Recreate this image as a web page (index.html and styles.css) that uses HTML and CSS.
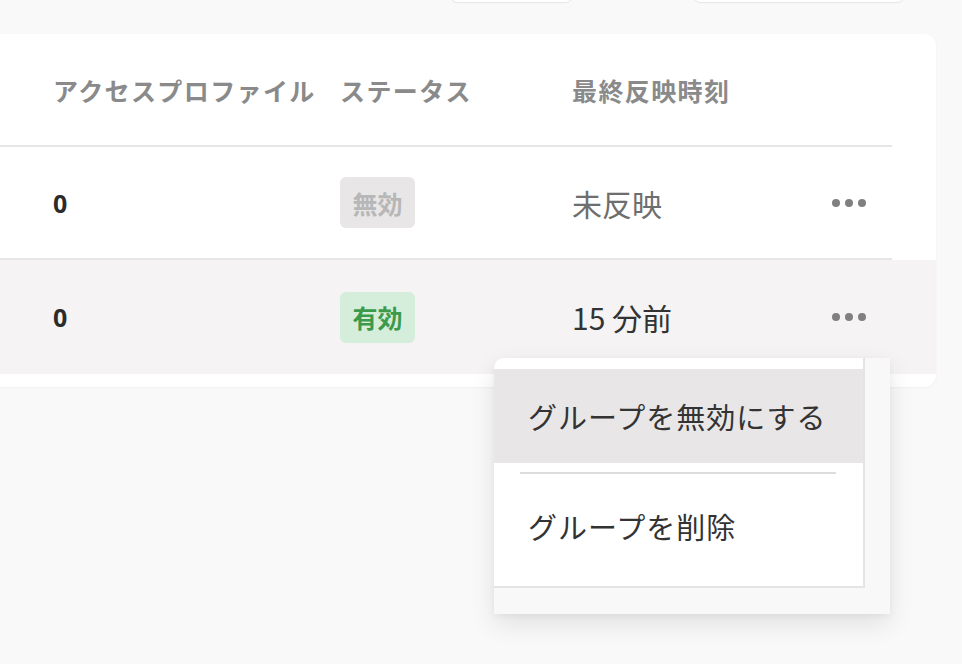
FILE: index.html
```html
<!DOCTYPE html>
<html lang="ja">
<head>
<meta charset="utf-8">
<link rel="stylesheet" href="styles.css">
</head>
<body>
<div class="toolbar">
  <div class="tb-btn tb-btn-a"></div>
  <div class="tb-btn tb-btn-b"></div>
</div>
<div class="card">
  <div class="row head">
    <div class="cell">アクセスプロファイル</div>
    <div class="cell">ステータス</div>
    <div class="cell">最終反映時刻</div>
    <div class="cell"></div>
  </div>
  <div class="row">
    <div class="cell num">0</div>
    <div class="cell"><span class="badge off">無効</span></div>
    <div class="cell time muted">未反映</div>
    <div class="cell"><span class="dots"><i></i><i></i><i></i></span></div>
  </div>
  <div class="row hover">
    <div class="cell num">0</div>
    <div class="cell"><span class="badge on">有効</span></div>
    <div class="cell time">15 分前</div>
    <div class="cell"><span class="dots"><i></i><i></i><i></i></span></div>
  </div>
</div>
<div class="menu">
  <ul class="menu-list">
    <li class="menu-item active">グループを無効にする</li>
    <li class="menu-sep"></li>
    <li class="menu-item">グループを削除</li>
  </ul>
</div>
</body>
</html>
```

FILE: styles.css
```css
* { box-sizing: border-box; }
html, body { margin: 0; padding: 0; }
body {
  background: #f9f9f9;
  font-family: "Noto Sans CJK JP", "Noto Sans", sans-serif;
  color: #333;
  width: 962px;
  height: 664px;
  overflow: hidden;
  position: relative;
}
.toolbar {
  display: flex;
  height: 42px;
  margin-top: -40px;
  padding-left: 450px;
  gap: 120px;
}
.tb-btn {
  height: 42px;
  border-radius: 8px;
  background: #fff;
  box-shadow: 0 1px 1px rgba(0,0,0,0.08);
}
.tb-btn-a { width: 123px; }
.tb-btn-b { width: 212px; }
.card {
  margin-top: 32px;
  margin-left: -20px;
  width: 956px;
  background: #fff;
  border-radius: 12px;
  box-shadow: 0 1px 3px rgba(0,0,0,0.04);
  padding-bottom: 13px;
  overflow: hidden;
}
.row {
  display: grid;
  grid-template-columns: 287px 232px 1fr auto;
  align-items: center;
  height: 113px;
  padding: 0 70px 2px 73px;
  background: linear-gradient(#e6e6e6, #e6e6e6) left bottom / calc(100% - 44px) 2px no-repeat;
}
.row.hover {
  background: #f5f3f4;
  height: 114px;
  padding-bottom: 0;
}
.head .cell {
  font-size: 25px;
  font-weight: 700;
  color: #8a8a8a;
  letter-spacing: 1.4px;
  white-space: nowrap;
}
.num {
  font-size: 25px;
  font-weight: 700;
  color: #2b2b2b;
  font-family: "Open Sans", "Noto Sans", sans-serif;
}
.badge {
  display: inline-flex;
  align-items: center;
  justify-content: center;
  width: 75px;
  height: 51px;
  border-radius: 6px;
  font-size: 25px;
  font-weight: 700;
}
.badge.off { background: #e8e6e7; color: #b7b7b7; }
.badge.on { background: #d5eedb; color: #3d9a4a; }
.time {
  font-size: 30px;
  color: #333;
}
.time.muted { color: #6e6e6e; }
.dots {
  display: flex;
  gap: 5px;
}
.dots i {
  width: 8px;
  height: 8px;
  border-radius: 50%;
  background: #808080;
}
.menu {
  position: absolute;
  left: 494px;
  top: 358px;
  width: 396px;
  height: 256px;
  background: #f8f8f8;
  border-top-left-radius: 10px;
  box-shadow: 0 10px 26px rgba(0,0,0,0.10), 0 2px 6px rgba(0,0,0,0.04);
}
.menu-list {
  list-style: none;
  margin: 0;
  padding: 11px 0 13px;
  width: 371px;
  background: #fff;
  border-right: 2px solid #e4e4e4;
  border-bottom: 2px solid #e4e4e4;
  border-top-left-radius: 10px;
}
.menu-item {
  height: 94px;
  display: flex;
  align-items: center;
  padding-left: 34px;
  font-size: 29px;
  color: #333;
  letter-spacing: 1px;
}
.menu-item.active { background: #e8e6e7; }
.menu-sep {
  height: 2px;
  margin: 9px 27px 5px 26px;
  background: #dcdcdc;
}
```
